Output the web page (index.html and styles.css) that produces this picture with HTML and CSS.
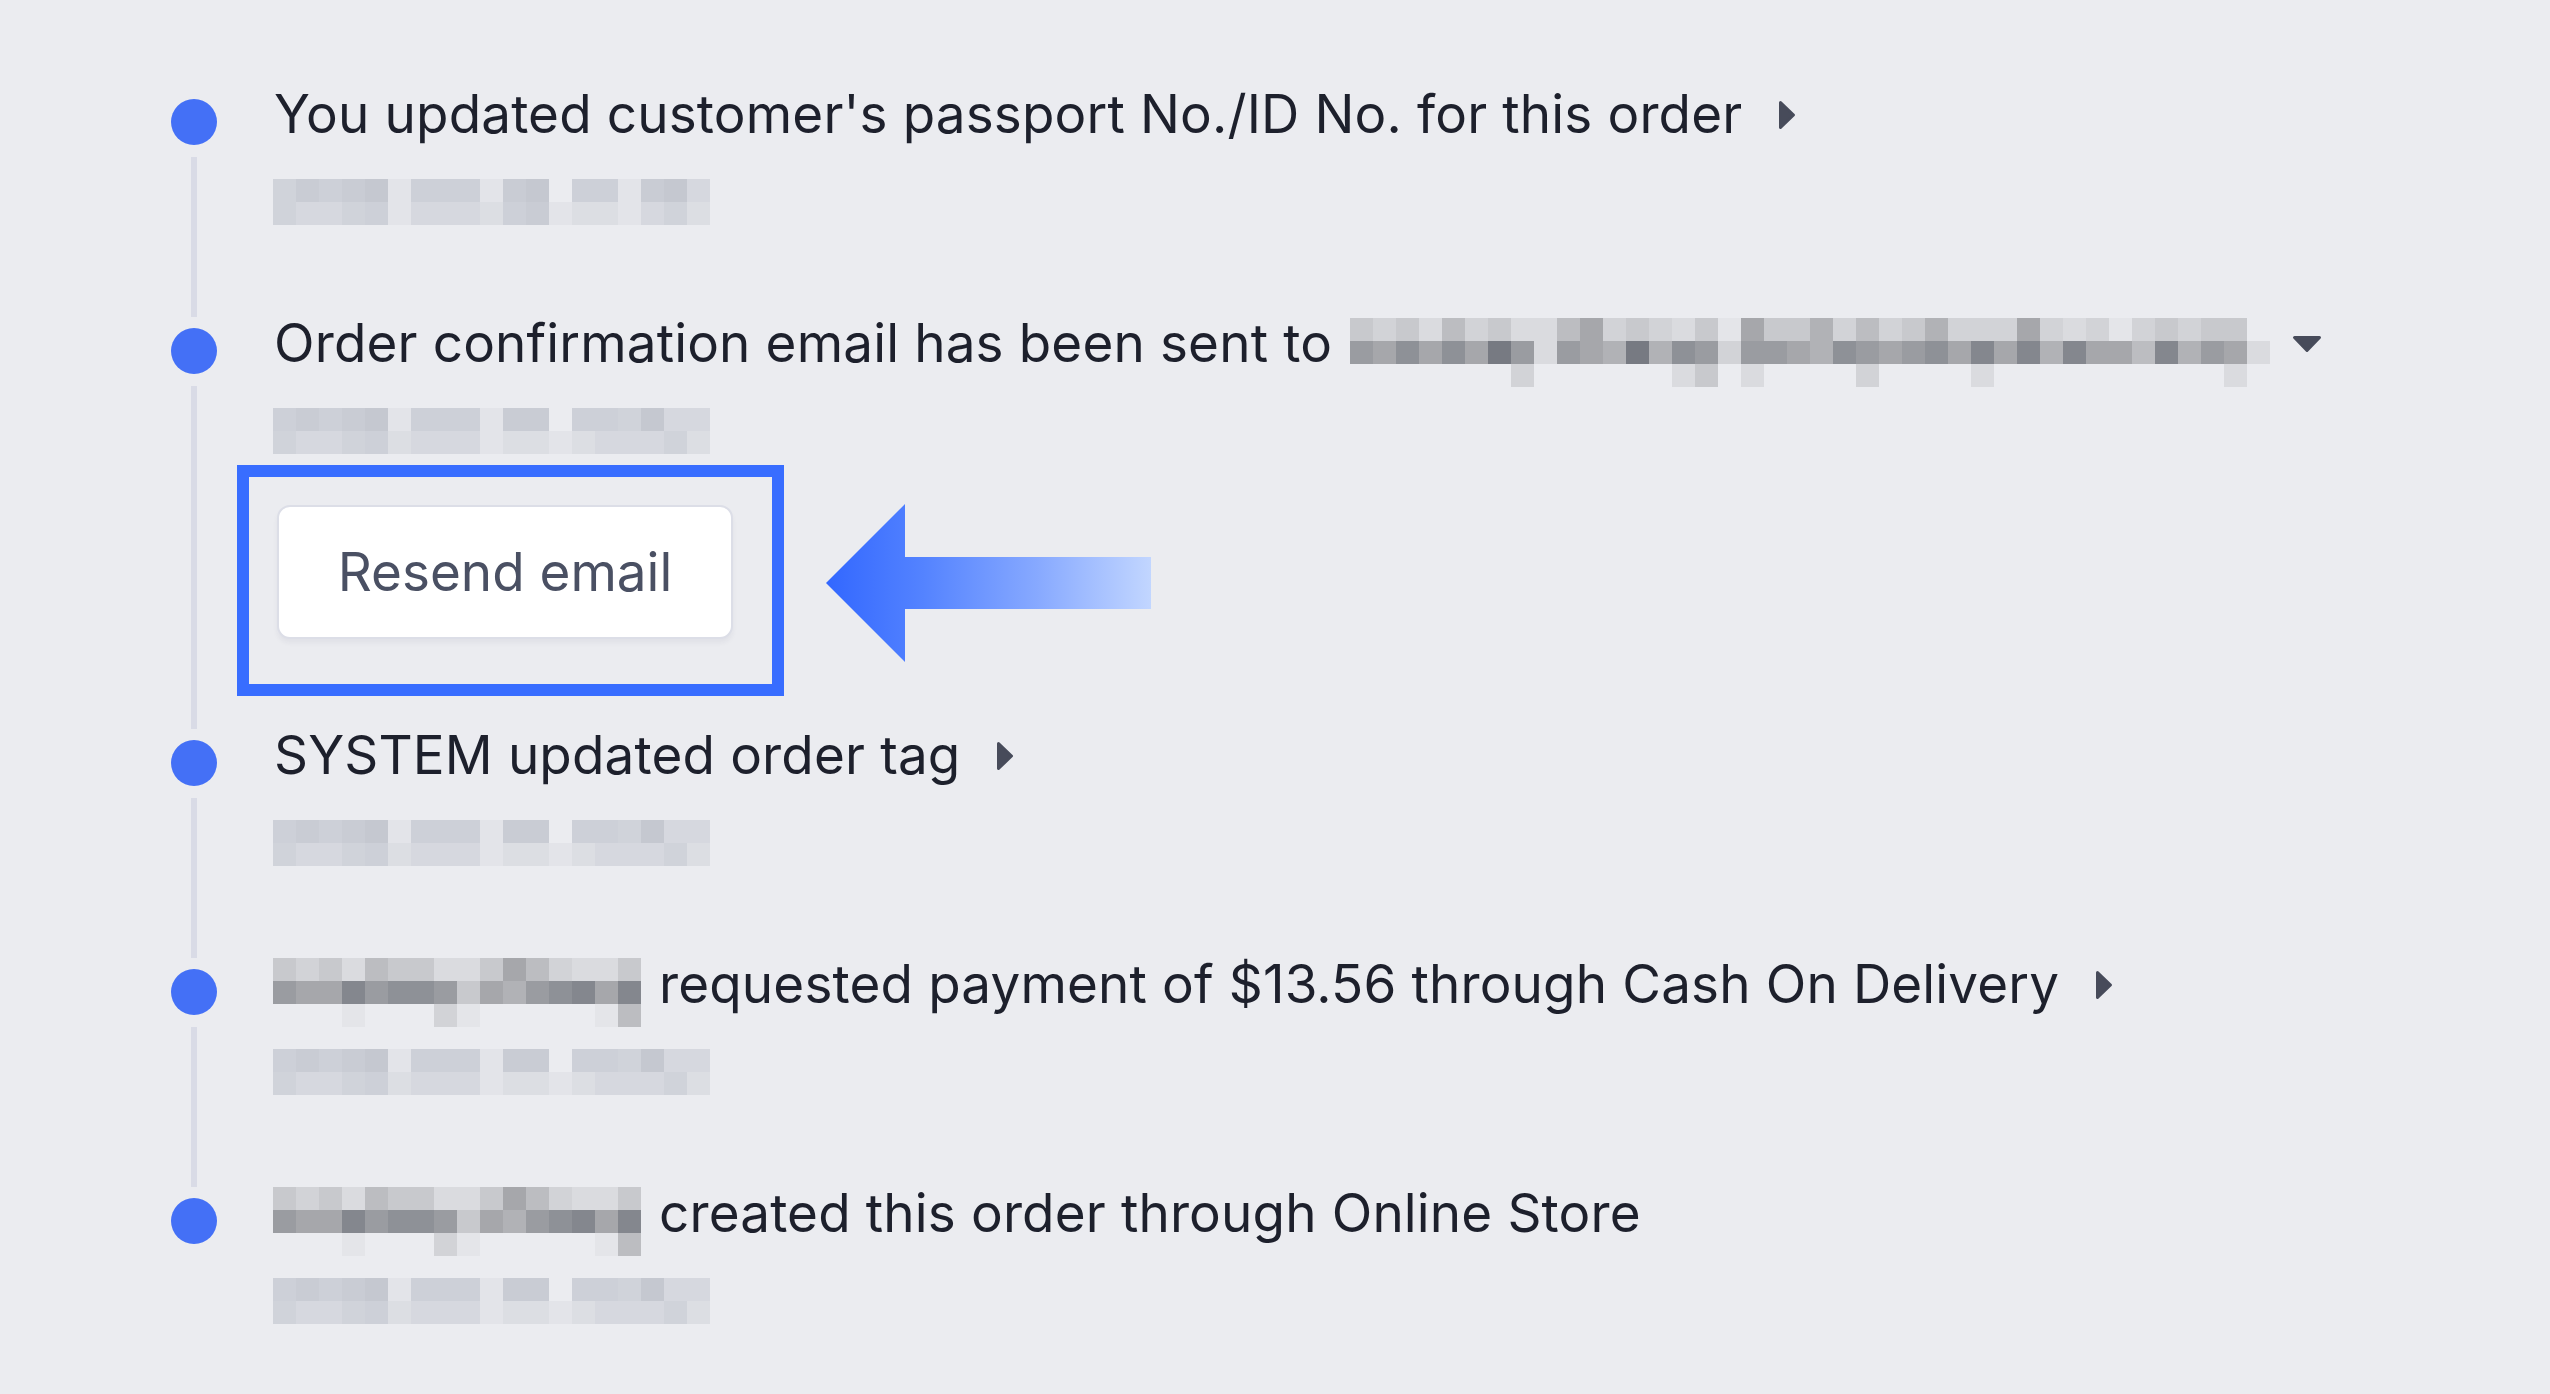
FILE: index.html
```html
<!DOCTYPE html>
<html lang="en">
<head>
<meta charset="utf-8">
<title>Order timeline</title>
<link rel="stylesheet" href="styles.css">
</head>
<body>
<main class="page">
  <ol class="timeline">
    <li class="item">
      <div class="rail"><span class="dot"></span><span class="line"></span></div>
      <div class="content">
        <div class="title">
          <span class="title-text">You updated customer's passport No./ID No. for this order</span>
          <svg class="caret caret-right" width="18" height="30" viewBox="0 0 18 30"><polygon points="2.5,2.5 15.5,15 2.5,27.5"/></svg>
        </div>
        <div class="mosaic date">
          <i class="d3"></i><i class="d5"></i><i class="d4"></i><i class="d5"></i><i class="d6"></i><i class="d0"></i><i class="d4"></i><i class="d4"></i><i class="d4"></i><i class="d0"></i><i class="d5"></i><i class="d6"></i><i class="e"></i><i class="d4"></i><i class="d4"></i><i class="d0"></i><i class="d5"></i><i class="d6"></i><i class="d2"></i>
          <i class="d3"></i><i class="d2"></i><i class="d2"></i><i class="d3"></i><i class="d4"></i><i class="d0"></i><i class="d2"></i><i class="d2"></i><i class="d2"></i><i class="d1"></i><i class="d4"></i><i class="d5"></i><i class="d0"></i><i class="d1"></i><i class="d1"></i><i class="d0"></i><i class="d2"></i><i class="d3"></i><i class="d1"></i>
        </div>
      </div>
    </li>
    <li class="item has-action">
      <div class="rail"><span class="dot"></span><span class="line"></span></div>
      <div class="content">
        <div class="title">
          <span class="title-text">Order confirmation email has been sent to</span>
          <div class="mosaic email">
            <i class="g3"></i><i class="g2"></i><i class="g3"></i><i class="g1"></i><i class="g4"></i><i class="g2"></i><i class="g3"></i><i class="g1"></i><i class="g1"></i><i class="g4"></i><i class="g6"></i><i class="g2"></i><i class="g3"></i><i class="g2"></i><i class="g1"></i><i class="g3"></i><i class="g0"></i><i class="g6"></i><i class="g3"></i><i class="g3"></i><i class="g5"></i><i class="g2"></i><i class="g4"></i><i class="g2"></i><i class="g3"></i><i class="g5"></i><i class="g2"></i><i class="g2"></i><i class="g2"></i><i class="g6"></i><i class="g2"></i><i class="g1"></i><i class="g2"></i><i class="g0"></i><i class="g2"></i><i class="g3"></i><i class="g2"></i><i class="g3"></i><i class="g3"></i><i class="e"></i>
            <i class="g7"></i><i class="g6"></i><i class="g8"></i><i class="g6"></i><i class="g8"></i><i class="g6"></i><i class="g10"></i><i class="g7"></i><i class="g1"></i><i class="g7"></i><i class="g6"></i><i class="g5"></i><i class="g10"></i><i class="g5"></i><i class="g8"></i><i class="g7"></i><i class="g2"></i><i class="g7"></i><i class="g7"></i><i class="g6"></i><i class="g5"></i><i class="g8"></i><i class="g7"></i><i class="g6"></i><i class="g7"></i><i class="g8"></i><i class="g6"></i><i class="g9"></i><i class="g6"></i><i class="g9"></i><i class="g5"></i><i class="g9"></i><i class="g6"></i><i class="g6"></i><i class="g4"></i><i class="g9"></i><i class="g5"></i><i class="g7"></i><i class="g6"></i><i class="g1"></i>
            <i class="e"></i><i class="e"></i><i class="e"></i><i class="e"></i><i class="e"></i><i class="e"></i><i class="e"></i><i class="g2"></i><i class="e"></i><i class="e"></i><i class="e"></i><i class="e"></i><i class="e"></i><i class="e"></i><i class="g1"></i><i class="g3"></i><i class="e"></i><i class="g1"></i><i class="e"></i><i class="e"></i><i class="e"></i><i class="e"></i><i class="g2"></i><i class="e"></i><i class="e"></i><i class="e"></i><i class="e"></i><i class="g1"></i><i class="e"></i><i class="e"></i><i class="e"></i><i class="e"></i><i class="e"></i><i class="e"></i><i class="e"></i><i class="e"></i><i class="e"></i><i class="e"></i><i class="g1"></i><i class="e"></i>
          </div>
          <svg class="caret caret-down" width="30" height="18" viewBox="0 0 30 18"><polygon points="2.5,2.5 27.5,2.5 15,15.5"/></svg>
        </div>
        <div class="mosaic date">
          <i class="d4"></i><i class="d5"></i><i class="d4"></i><i class="d5"></i><i class="d6"></i><i class="d0"></i><i class="d4"></i><i class="d4"></i><i class="d4"></i><i class="d0"></i><i class="d5"></i><i class="d5"></i><i class="e"></i><i class="d4"></i><i class="d4"></i><i class="d3"></i><i class="d6"></i><i class="d2"></i><i class="d2"></i>
          <i class="d3"></i><i class="d2"></i><i class="d2"></i><i class="d3"></i><i class="d4"></i><i class="d1"></i><i class="d2"></i><i class="d2"></i><i class="d2"></i><i class="d0"></i><i class="d1"></i><i class="d1"></i><i class="d0"></i><i class="d1"></i><i class="d2"></i><i class="d2"></i><i class="d2"></i><i class="d3"></i><i class="d1"></i>
        </div>
        <div class="action-row">
          <div class="highlight">
            <button class="btn" type="button">Resend email</button>
          </div>
          <svg class="pointer" width="325" height="158" viewBox="0 0 325 158">
            <defs>
              <linearGradient id="arrowGrad" x1="0" y1="0" x2="1" y2="0">
                <stop offset="0" stop-color="#3267ff"/>
                <stop offset="0.3" stop-color="#5483ff"/>
                <stop offset="0.65" stop-color="#87a9ff"/>
                <stop offset="1" stop-color="#c2d6ff"/>
              </linearGradient>
            </defs>
            <polygon points="0,79 79,0 79,53 325,53 325,105 79,105 79,158" fill="url(#arrowGrad)"/>
          </svg>
        </div>
      </div>
    </li>
    <li class="item">
      <div class="rail"><span class="dot"></span><span class="line"></span></div>
      <div class="content">
        <div class="title">
          <span class="title-text">SYSTEM updated order tag</span>
          <svg class="caret caret-right" width="18" height="30" viewBox="0 0 18 30"><polygon points="2.5,2.5 15.5,15 2.5,27.5"/></svg>
        </div>
        <div class="mosaic date">
          <i class="d4"></i><i class="d5"></i><i class="d4"></i><i class="d5"></i><i class="d6"></i><i class="d0"></i><i class="d4"></i><i class="d4"></i><i class="d4"></i><i class="d0"></i><i class="d5"></i><i class="d5"></i><i class="e"></i><i class="d4"></i><i class="d4"></i><i class="d3"></i><i class="d6"></i><i class="d2"></i><i class="d2"></i>
          <i class="d3"></i><i class="d2"></i><i class="d2"></i><i class="d3"></i><i class="d4"></i><i class="d1"></i><i class="d2"></i><i class="d2"></i><i class="d2"></i><i class="d0"></i><i class="d1"></i><i class="d1"></i><i class="d0"></i><i class="d1"></i><i class="d2"></i><i class="d2"></i><i class="d2"></i><i class="d3"></i><i class="d1"></i>
        </div>
      </div>
    </li>
    <li class="item">
      <div class="rail"><span class="dot"></span><span class="line"></span></div>
      <div class="content">
        <div class="title">
          <div class="mosaic name">
            <i class="g3"></i><i class="g2"></i><i class="g3"></i><i class="g1"></i><i class="g4"></i><i class="g3"></i><i class="g3"></i><i class="g1"></i><i class="g1"></i><i class="g3"></i><i class="g6"></i><i class="g4"></i><i class="g2"></i><i class="g1"></i><i class="g1"></i><i class="g3"></i>
            <i class="g7"></i><i class="g6"></i><i class="g6"></i><i class="g9"></i><i class="g7"></i><i class="g8"></i><i class="g8"></i><i class="g7"></i><i class="g3"></i><i class="g6"></i><i class="g5"></i><i class="g7"></i><i class="g8"></i><i class="g9"></i><i class="g6"></i><i class="g9"></i>
            <i class="e"></i><i class="e"></i><i class="e"></i><i class="g0"></i><i class="e"></i><i class="e"></i><i class="e"></i><i class="g2"></i><i class="g0"></i><i class="e"></i><i class="e"></i><i class="e"></i><i class="e"></i><i class="e"></i><i class="g0"></i><i class="g4"></i>
          </div>
          <span class="title-text">requested payment of $13.56 through Cash On Delivery</span>
          <svg class="caret caret-right" width="18" height="30" viewBox="0 0 18 30"><polygon points="2.5,2.5 15.5,15 2.5,27.5"/></svg>
        </div>
        <div class="mosaic date">
          <i class="d4"></i><i class="d5"></i><i class="d4"></i><i class="d5"></i><i class="d6"></i><i class="d0"></i><i class="d4"></i><i class="d4"></i><i class="d4"></i><i class="d0"></i><i class="d5"></i><i class="d5"></i><i class="e"></i><i class="d4"></i><i class="d4"></i><i class="d3"></i><i class="d6"></i><i class="d2"></i><i class="d2"></i>
          <i class="d3"></i><i class="d2"></i><i class="d2"></i><i class="d3"></i><i class="d4"></i><i class="d1"></i><i class="d2"></i><i class="d2"></i><i class="d2"></i><i class="d0"></i><i class="d1"></i><i class="d1"></i><i class="d0"></i><i class="d1"></i><i class="d2"></i><i class="d2"></i><i class="d2"></i><i class="d3"></i><i class="d1"></i>
        </div>
      </div>
    </li>
    <li class="item last">
      <div class="rail"><span class="dot"></span></div>
      <div class="content">
        <div class="title">
          <div class="mosaic name">
            <i class="g3"></i><i class="g2"></i><i class="g3"></i><i class="g1"></i><i class="g4"></i><i class="g3"></i><i class="g3"></i><i class="g1"></i><i class="g1"></i><i class="g3"></i><i class="g6"></i><i class="g4"></i><i class="g2"></i><i class="g1"></i><i class="g1"></i><i class="g3"></i>
            <i class="g7"></i><i class="g6"></i><i class="g6"></i><i class="g9"></i><i class="g7"></i><i class="g8"></i><i class="g8"></i><i class="g7"></i><i class="g3"></i><i class="g6"></i><i class="g5"></i><i class="g7"></i><i class="g8"></i><i class="g9"></i><i class="g6"></i><i class="g9"></i>
            <i class="e"></i><i class="e"></i><i class="e"></i><i class="g0"></i><i class="e"></i><i class="e"></i><i class="e"></i><i class="g2"></i><i class="g0"></i><i class="e"></i><i class="e"></i><i class="e"></i><i class="e"></i><i class="e"></i><i class="g0"></i><i class="g4"></i>
          </div>
          <span class="title-text">created this order through Online Store</span>
        </div>
        <div class="mosaic date">
          <i class="d4"></i><i class="d5"></i><i class="d4"></i><i class="d5"></i><i class="d6"></i><i class="d0"></i><i class="d4"></i><i class="d4"></i><i class="d4"></i><i class="d0"></i><i class="d5"></i><i class="d5"></i><i class="e"></i><i class="d4"></i><i class="d4"></i><i class="d3"></i><i class="d6"></i><i class="d2"></i><i class="d2"></i>
          <i class="d3"></i><i class="d2"></i><i class="d2"></i><i class="d3"></i><i class="d4"></i><i class="d1"></i><i class="d2"></i><i class="d2"></i><i class="d2"></i><i class="d0"></i><i class="d1"></i><i class="d1"></i><i class="d0"></i><i class="d1"></i><i class="d2"></i><i class="d2"></i><i class="d2"></i><i class="d3"></i><i class="d1"></i>
        </div>
      </div>
    </li>
  </ol>
</main>
</body>
</html>
```
FILE: styles.css
```css
* { box-sizing: border-box; }

html, body {
  margin: 0;
  padding: 0;
  background: #ebecf0;
}

body {
  font-family: Inter, "Noto Sans", "Liberation Sans", sans-serif;
  color: #1d202c;
}

.page {
  min-height: 100vh;
  padding: 79px 0 0 171px;
}

.timeline {
  list-style: none;
  margin: 0;
  padding: 0;
}

.item {
  display: grid;
  grid-template-columns: 46px 1fr;
  column-gap: 56px;
}

.rail {
  display: flex;
  flex-direction: column;
  align-items: center;
}

.dot {
  flex: none;
  width: 46px;
  height: 46px;
  margin-top: 20px;
  border-radius: 50%;
  background: #4470f6;
}

.line {
  flex: 1;
  width: 6px;
  margin-top: 12px;
  margin-bottom: -9px;
  background: #d9dbe6;
}

.content {
  display: flex;
  flex-direction: column;
  align-items: flex-start;
  padding-bottom: 83px;
}

.has-action .content { padding-bottom: 24px; }
.last .content { padding-bottom: 0; }

.title {
  display: flex;
  align-items: flex-start;
}

.title-text {
  font-size: 53px;
  letter-spacing: 0.15px;
  line-height: 70px;
  height: 70px;
  white-space: nowrap;
  padding-left: 1px;
}

.caret { flex: none; fill: #474b5a; stroke: #474b5a; stroke-width: 3; stroke-linejoin: round; }
.caret-right { margin: 21px 0 0 36px; }
.caret-down { margin: 27px 0 0 22px; }

.mosaic {
  display: grid;
  grid-auto-rows: 23px;
  flex: none;
}
.mosaic i { display: block; }

.date { grid-template-columns: repeat(19, 23px); margin-top: 30px; }
.name { grid-template-columns: repeat(16, 23px); margin: 9px 17px -8px 0; }
.email { grid-template-columns: repeat(40, 23px); margin: 10px 0 -9px 18px; }

.e { background: transparent; }
.d0 { background: #e3e4e9; }
.d1 { background: #dcdee3; }
.d2 { background: #d6d8df; }
.d3 { background: #d0d3da; }
.d4 { background: #cdd0d8; }
.d5 { background: #c9ccd4; }
.d6 { background: #c5c8d0; }

.g0 { background: #e4e5e9; }
.g1 { background: #dadbdf; }
.g2 { background: #d2d3d7; }
.g3 { background: #c8c9cd; }
.g4 { background: #bcbdc1; }
.g5 { background: #b1b2b6; }
.g6 { background: #a6a7ab; }
.g7 { background: #9a9ca1; }
.g8 { background: #8e9197; }
.g9 { background: #84878e; }
.g10 { background: #777a82; }

.action-row {
  display: flex;
  align-items: center;
  margin: 11px 0 0 -36px;
}

.highlight {
  border: 12px solid #386dff;
  padding: 28px 39px 45px 28px;
}

.btn {
  display: block;
  width: 456px;
  height: 134px;
  padding: 0;
  background: #ffffff;
  border: 2px solid #dcdee7;
  border-radius: 13px;
  box-shadow: 0 4px 5px rgba(30, 40, 80, 0.05);
  font-family: Inter, "Noto Sans", "Liberation Sans", sans-serif;
  font-size: 53px;
  color: #4a5063;
  cursor: pointer;
}

.pointer {
  flex: none;
  margin: 5px 0 0 42px;
}
```
